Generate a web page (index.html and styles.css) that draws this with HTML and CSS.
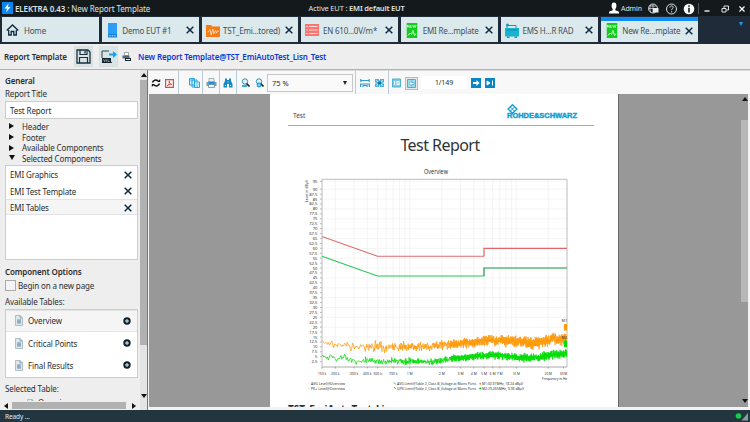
FILE: index.html
```html
<!DOCTYPE html>
<html lang="en">
<head>
<meta charset="utf-8">
<title>ELEKTRA 0.43 : New Report Template</title>
<link rel="stylesheet" href="styles.css">
</head>
<body>
<svg class="defs" width="0" height="0">
  <symbol id="x" viewBox="0 0 8 8"><path d="M.7.7l6.6 6.6M7.3.7L.7 7.3" stroke="#0b2c40" stroke-width="1.5"/></symbol>
  <symbol id="report" viewBox="0 0 11 15"><path d="M0 0h11v15H0z" fill="#12ce1c"/><path d="M1 2v2.500M1 2l1.700 2.500V2M4 2v2.500h1.200M4 3.200h1.200M6.300 2l.7 2.500.8-2 .8 2L9.500 2" stroke="#d8ffd8" stroke-width=".7" fill="none"/><path d="M1.500 12.500l2-2.500 1.500 1.500 1.500-4 1.500 5 1.500-2" stroke="#fff" stroke-width=".8" fill="none"/></symbol>
  <symbol id="doc" viewBox="0 0 8 11"><path d="M.5.5h4.700L7.500 3v7.500h-7z" fill="#dfe9ed" stroke="#9db4bf" stroke-width=".8"/><path d="M5 .5V3h2.500" fill="none" stroke="#7c9aa8" stroke-width=".8"/><path d="M2 4.500h4v4H2z" fill="#7293a3"/><path d="M2 5.800h4M2 7.200h4" stroke="#dfe9ed" stroke-width=".5"/></symbol>
  <symbol id="add" viewBox="0 0 8 8"><circle cx="4" cy="4" r="3.700" fill="#0b2230"/><path d="M4 2v4M2 4h4" stroke="#e8f2f4" stroke-width="1"/></symbol>
</svg>
<div class="app">
  <header class="titlebar">
    <svg class="logo" width="11" height="12"><path d="M0 0h11v12H0z" fill="#0a86ee"/><path d="M6.500 1.500L2.500 6.500h2.500L4 10.500l4.500-5.500H6z" fill="#fff"/></svg>
    <span class="app-name"><b>ELEKTRA 0.43 :</b> New Report Template</span>
    <span class="active-eut">Active EUT : <b>EMI default EUT</b></span>
    <svg class="user" width="12" height="12"><ellipse cx="6" cy="3.800" rx="2.400" ry="3.200" fill="#fff"/><path d="M4.700 6h2.600v2.300L11 9.800V11.500H1V9.800l3.700-1.500z" fill="#fff"/></svg>
    <span class="admin">Admin</span>
    <svg class="sys" width="104" height="14" fill="none" stroke="#dde2e4">
      <circle cx="7" cy="6.500" r="4.500" stroke-width=".9"/><path d="M2.500 6.500h9M7 2v9M3.500 4h7M5 2.500c-1.500 3-1.500 5 0 8" stroke-width=".7"/><path d="M7 6h5.500v4.500H7z" fill="#e8ebec" stroke="none"/>
      <circle cx="25.500" cy="7" r="5" stroke-width="1"/><path d="M23.900 5.500c0-2.200 3.300-2.100 3.300-.1 0 1.200-1.600 1.200-1.600 2.700M25.600 9.200v1.200" stroke-width="1"/>
      <circle cx="43" cy="7" r="5.300" fill="#fff" stroke="none"/><path d="M43 3.200v1.600M43 5.800v4.700" stroke="#14191c" stroke-width="1.600"/>
      <path d="M52.500 1v11" stroke="#4d565b"/><path d="M58.500 9h5" stroke-width="1.500"/>
      <path d="M76 6.500h4v3.500h-4zM78 6V4h4.500v4H80.500" stroke-width="1"/><path d="M93.500 4.500l5 5M98.500 4.500l-5 5" stroke="#fff" stroke-width="1.200"/>
    </svg>
  </header>
  <nav class="tabs">
    <div class="tab home"><svg width="13" height="12" fill="none" stroke="#0c2b3f"><path d="M.7 6.500L6.500 1l5.800 5.500" stroke-width="1.400"/><path d="M2.700 6v5h2.500V7.500h2.600V11h2.500V6" stroke-width="1.300"/></svg><span>Home</span></div>
    <div class="tab"><svg width="13" height="15"><path d="M2 0h9v11H2z" fill="#2b9df4"/><path d="M2 11h9v3.500H2z" fill="#1480d8"/><path d="M3.200 12.800h1.500M5.700 12.800h1.500M8.200 12.800h1.500" stroke="#cfe8fb"/></svg><span>Demo EUT #1</span><svg class="close" width="8" height="8"><use href="#x"/></svg></div>
    <div class="tab"><svg width="14" height="13"><path d="M0 1h5l1 1.500h8V13H0z" fill="#f77a12"/><path d="M1 8h1.500L4 5.500 5.200 11 6.800 5l1.200 5 1.500-3.500 1 2.500 1.200-2.500L13 8" fill="none" stroke="#ffe8d0" stroke-width=".8"/></svg><span>TST_Emi...tored)</span><svg class="close" width="8" height="8"><use href="#x"/></svg></div>
    <div class="tab"><svg width="14" height="12"><path d="M0 0h14v12H0z" fill="#fa7470"/><path d="M1.300 2.500h1.500M1.300 6h1.500M1.300 9.500h1.500M4 2.500h8.500M4 6h8.500M4 9.500h8.500" stroke="#ffe0de" stroke-width="1.100"/></svg><span>EN 610...0V/m*</span><svg class="close" width="8" height="8"><use href="#x"/></svg></div>
    <div class="tab"><svg width="14" height="15"><use href="#report" x="1.500" width="11" height="15"/></svg><span>EMI Re...mplate</span><svg class="close" width="8" height="8"><use href="#x"/></svg></div>
    <div class="tab"><svg width="14" height="15"><path d="M0 5h14v8.500H0z" fill="#18b2d2"/><path d="M2 5V2.500h9V5" fill="none" stroke="#1597b8"/><circle cx="2.500" cy="2" r="1.500" fill="#1597b8"/><path d="M1.500 7h11" stroke="#0e8dab"/><path d="M2 13.500h2.500V15H2zM9.500 13.500H12V15H9.500z" fill="#1597b8"/></svg><span>EMS H...R RAD</span><svg class="close" width="8" height="8"><use href="#x"/></svg></div>
    <div class="tab active"><svg width="14" height="15"><use href="#report" x="1.500" width="11" height="15"/></svg><span>New Re...mplate</span><svg class="close" width="8" height="8"><use href="#x"/></svg></div>
    <i class="more"></i>
  </nav>
  <section class="heading">
    <b class="heading-title">Report Template</b>
    <button class="tool"><svg width="15" height="15" fill="none" stroke="#16303d"><path d="M1 1h11l2 2v11H1z" stroke-width="1.300"/><path d="M4 1v4.500h7V1M3.500 14V8.500h8V14M9 2v2.500" stroke-width="1.200"/></svg></button>
    <button class="tool second"><svg width="16" height="15" fill="none"><path d="M8 2H1v7M1 13.500h10" stroke="#30454e"/><path d="M1 9h9v5H1z" fill="#13242c"/><path d="M2.500 10.500l1 2 1-2M5.500 12.500v-2M7 10.500v2h1.500" stroke="#dde" stroke-width=".6"/><path d="M8 4.500h4V2l4 3.500L12 9V6.500H8z" fill="#12a2f2"/></svg></button>
    <svg class="printer" width="10" height="10"><path d="M2.500.5h4v3h-4z" fill="#fff" stroke="#789" stroke-width=".7"/><path d="M.5 3.500h7v3h-7z" fill="#536872"/><path d="M3 6h6v3H3z" fill="#17242b"/><path d="M4 7h4v1H4z" fill="#e3f4fa"/></svg>
    <b class="template-link">New Report Template@TST_EmiAutoTest_Lisn_Test</b>
  </section>
  <main class="workspace">
    <aside class="side">
      <div class="options">
        <h2>General</h2>
        <label>Report Title</label>
        <div class="input">Test Report</div>
        <ul class="tree"><li><i class="tri"></i>Header</li><li><i class="tri"></i>Footer</li><li><i class="tri"></i>Available Components</li><li><i class="tri open"></i>Selected Components</li></ul>
        <ul class="components">
          <li>EMI Graphics<svg width="8" height="8"><use href="#x"/></svg></li>
          <li>EMI Test Template<svg width="8" height="8"><use href="#x"/></svg></li>
          <li class="selected">EMI Tables<svg width="8" height="8"><use href="#x"/></svg></li>
        </ul>
        <h2 class="component-title">Component Options</h2>
        <label class="check"><i></i>Begin on a new page</label>
        <label class="tables-label">Available Tables:</label>
        <ul class="tables">
          <li class="selected"><svg width="8" height="11"><use href="#doc"/></svg><span>Overview</span><svg width="8" height="8"><use href="#add"/></svg></li>
          <li><svg width="8" height="11"><use href="#doc"/></svg><span>Critical Points</span><svg width="8" height="8"><use href="#add"/></svg></li>
          <li><svg width="8" height="11"><use href="#doc"/></svg><span>Final Results</span><svg width="8" height="8"><use href="#add"/></svg></li>
        </ul>
        <label class="chosen-label">Selected Table:</label>
        <div class="chosen"><svg width="8" height="11"><use href="#doc"/></svg><span>Overview</span></div>
        <div class="hscroll"><i class="left"></i><b></b><i class="right"></i></div>
      </div>
      <div class="vscroll"><i class="up"></i><b></b><i class="down"></i></div>
    </aside>
    <section class="preview">
      <div class="toolbar">
        <div class="group g1"><svg width="10" height="10" fill="none" stroke="#111" stroke-width="1.500"><path d="M1.500 4.500C2.300 2 5 1.500 7 2.800M8.500 5.500C7.700 8 5 8.500 3 7.200"/><path d="M6 4h3.200V1zM4 6H.8v3z" fill="#111" stroke="none"/></svg>
          <svg width="9" height="9" fill="none" stroke="#df4b43"><path d="M.6.600h7.800v7.800H.6z" stroke-width="1.200"/><path d="M2 7c2-1 3-4 2.300-5.200C3.500 2.500 5 5.500 7 5.500 5 5 3 6 2 7" stroke-width=".9"/></svg></div>
        <div class="group g2"><svg width="11" height="10"><path d="M.5.500h5v6.500h-5zM3 2h5v7H3z" fill="#c9ecfb" stroke="#2aa6df"/><path d="M5.500 4h5v5.500h-5z" fill="#edf9fe" stroke="#2aa6df"/><path d="M1 2h5M6.500 6h3M6.500 8h3" stroke="#2aa6df" stroke-width=".8"/></svg></div>
        <div class="group g3"><svg width="11" height="10"><path d="M3 .5h5v4H3z" fill="#eaf2f6" stroke="#7d95a2" stroke-width=".7"/><path d="M.5 4h10v4H.5z" fill="#8499a5"/><path d="M2.500 3.500h6v2h-6z" fill="#1687d8"/><path d="M2.500 6.500h6v3h-6z" fill="#eaf5fb" stroke="#4b83a1" stroke-width=".7"/></svg></div>
        <div class="group g4"><svg width="10" height="10" fill="#1688c4"><path d="M2 .5h2v1.500h2V.5h2V3l1.500 3v3.500H6V6H4v3.500H.5V6L2 3z"/><path d="M2 7.500h1M7 7.500h1M4.500 4h1" stroke="#bde9fb"/></svg></div>
        <div class="group g5"><svg width="9" height="10" fill="none"><circle cx="4" cy="3.500" r="2.700" stroke="#3e8fac" fill="#d9f2fb"/><path d="M5.500 5.500l3 3" stroke="#222" stroke-width="1.700"/><path d="M1 8h5" stroke="#35abda" stroke-width="2"/></svg>
          <svg width="9" height="10" fill="none"><circle cx="4" cy="3.500" r="2.700" stroke="#3e8fac" fill="#d9f2fb"/><path d="M5.500 5.500l3 3" stroke="#222" stroke-width="1.700"/><circle cx="4" cy="7" r="2.400" fill="#159bd2"/><path d="M2.700 7h2.600M4 5.700v2.600" stroke="#fff" stroke-width=".6"/></svg></div>
        <div class="zoom-box">75 %<i class="caret"></i></div>
        <div class="group g6"><svg width="10" height="10" fill="none" stroke="#2d9ec9" stroke-width="1.200"><path d="M.8 1v3M9.200 1v3M1 2.500h8M.6 9V6h8.800v3M3 9V7.500h4V9"/></svg>
          <svg width="9" height="10"><path d="M0 1h9v8H0z" fill="#47b2dc"/><path d="M1.500 2.500l6 5M7.500 2.500l-6 5" stroke="#fff"/><path d="M3 3.500h3v3H3z" fill="#16779e"/><path d="M4.500 1v1.500M4.500 7.500V9M0 5h1.500M7.500 5H9" stroke="#fff"/></svg></div>
        <div class="group g7"><svg width="9" height="10"><path d="M.5 1h8v8h-8z" fill="#7dcbe6" stroke="#4fb0d3"/><path d="M2.500 3v4M7 3.500h-2v3h2z" fill="none" stroke="#effaff" stroke-width="1.100"/></svg>
          <span class="prev"><svg width="9" height="9"><path d="M.5.500h8v8h-8z" fill="#9cdcef" stroke="#4bb0d0"/><path d="M4.700 2L2 4.500 4.700 7V5.500H7v-2H4.700z" fill="#fff" stroke="#2795ba" stroke-width=".6"/></svg></span></div>
        <div class="page-number">1/149</div>
        <div class="group g8"><svg width="10" height="10"><path d="M0 0h10v10H0z" fill="#0a86c8"/><path d="M5.500 2L8.500 5l-3 3V6H2V4h3.500z" fill="#fff"/></svg>
          <svg width="10" height="10"><path d="M0 0h10v10H0z" fill="#0a86c8"/><path d="M2 3v4l3-2zM7.500 2.500v5" fill="#fff" stroke="#fff"/></svg></div>
      </div>
      <div class="viewer">
        <article class="page">
          <div class="page-head"><span>Test</span>
            <svg width="71" height="15"><g fill="none" stroke="#0b9ed3"><path d="M5.500 .7L10 5 5.500 9.300 1 5z" stroke-width="1.300"/><path d="M3.200 2.900l4.500 4.300M7.700 2.900L3.200 7.200" stroke-width="1"/></g><text x="0" y="14.200" textLength="70" lengthAdjust="spacingAndGlyphs" class="brand">ROHDE&amp;SCHWARZ</text></svg></div>
          <h1>Test Report</h1>
          <svg class="chart" viewBox="270 165 348 234" width="348" height="234" id="chart"></svg>
          <h3>TST_EmiAutoTest_Lisn</h3>
        </article>
        <div class="vscroll viewer-scroll"><i class="up"></i><b></b><i class="down"></i></div>
      </div>
    </section>
  </main>
  <footer class="status"><span>Ready ...</span><svg width="14" height="10"><circle cx="3.500" cy="5" r="2.800" fill="#18cb4a"/><path d="M13 2v7.500H6.500z" fill="#8b9ba3"/></svg></footer>
</div>
<script src="chart.js"></script>
</body>
</html>
```
FILE: styles.css
```css
* { box-sizing: border-box; }
body { margin: 0; font-family: "Noto Sans", "Open Sans", sans-serif; font-size: 8px; line-height: 11px; letter-spacing: -.13px; color: #2b2e30; }
ul, h1, h2, h3 { margin: 0; padding: 0; list-style: none; }
svg { display: block; flex: none; }
.defs { position: absolute; }
b { font-weight: 600; }
.app { width: 750px; height: 422px; display: flex; flex-direction: column; overflow: hidden; background: #eeeeee; white-space: nowrap; }

.titlebar { height: 16px; background: #14191c; color: #dfe3e5; display: flex; align-items: center; padding-left: 2px; flex: none; }
.logo { margin-right: 2px; }
.app-name { width: 294px; font-size: 8px; letter-spacing: -.11px; }
.active-eut { width: 300px; font-size: 7.5px; letter-spacing: -.17px; }
.user { margin: 0; }
.admin { font-size: 7px; margin-left: 1px; width: 25px; letter-spacing: -.1px; }
.sys { margin-top: 1px; }

.tabs { height: 28px; background: #1f2b39; display: flex; gap: 3px; padding: 1px 0 2px 2px; flex: none; }
.tab { width: 96.8px; background: #dce9ec; display: flex; align-items: center; padding: 1px 5px 0 4px; gap: 3.500px; font-size: 8px; color: #405058; letter-spacing: -.2px; }
.tab span { flex: 1; width: 0; }
.tab.home { gap: 5px; }
.tab.active { border-top: 4px solid #108bf2; padding-top: 0; padding-bottom: 2px; }
.more { width: 0; height: 0; border: 2.500px solid transparent; border-top: 4px solid #1c9be8; border-bottom: 0; margin: 5px 0 0 38px; }

.heading { height: 26px; border-bottom: 1px solid #a4b4c2; display: flex; align-items: center; padding-left: 4px; flex: none; background: #eee; }
.heading-title { width: 69px; font-size: 8px; }
.tool { width: 19px; height: 21px; border: 1px solid #dadedf; background: #d9e4e7; padding: 0; display: flex; align-items: center; justify-content: center; margin-left: 1px; }
.tool.second { margin-left: 6px; }
.printer { margin: 0 6px 0 4px; }
.template-link { color: #0b37d8; font-size: 8px; letter-spacing: -.17px; }

.workspace { height: 340px; display: flex; flex: none; }
.side { width: 148px; display: flex; border-right: 1px solid #777; background: #eee; }
.options { width: 140px; padding: 4px 2px 0 5px; display: flex; flex-direction: column; }
h2 { font-size: 8px; font-weight: 600; line-height: 13px; }
.options > label { display: block; line-height: 13px; }
.input { height: 18px; margin-top: 1px; background: #fff; border: 1px solid #ccc; padding-left: 4px; line-height: 17px; flex: none; }
.tree { padding: 2px 0 0 4px; }
.tree li { display: flex; align-items: center; height: 10.700px; }
.tri { width: 13px; height: 6px; }
.tri::before { content: ""; display: block; width: 0; height: 0; border: 3px solid transparent; border-left: 5px solid #101314; border-right: 0; }
.tri.open::before { border: 3px solid transparent; border-top: 5px solid #101314; border-bottom: 0; }
.components { height: 95px; margin-top: 1px; background: #fff; border: 1px solid #ccc; flex: none; }
.components li { height: 16.500px; display: flex; align-items: center; justify-content: space-between; padding: 1px 5px 0 4px; }
.selected { background: #f5f5f5; border-top: 1px solid #e3e3e3; border-bottom: 1px solid #e3e3e3; }
.component-title { margin-top: 5px; }
.options > .check { display: flex; align-items: center; height: 15px; }
.check i { width: 11px; height: 11px; border: 1px solid #aaa; background: #f4f4f4; margin-right: 2px; }
.options > .tables-label { margin-top: 2px; line-height: 13px; }
.tables { background: #fff; border: 1px solid #ccc; height: 69px; margin-top: 1px; flex: none; }
.tables li { height: 22.300px; display: flex; align-items: center; padding: 0 6px 0 9px; }
.tables span { flex: 1; margin-left: 5px; }
.options > .chosen-label { margin-top: 4px; }
.chosen { height: 6px; overflow: hidden; display: flex; padding: 4px 0 0 22px; gap: 3px; flex: none; }
.chosen span { line-height: 8px; }
.hscroll { display: flex; align-items: center; height: 8px; margin: 1px 0 0 -5px; flex: none; }
.hscroll b { height: 7px; width: 115px; background: #b1b1b1; }
.left, .right { width: 12px; height: 6px; }
.left::before, .right::before { content: ""; display: block; width: 0; height: 0; border: 3px solid transparent; margin-left: 4px; }
.left::before { border-right: 4px solid #111; border-left: 0; }
.right::before { border-left: 4px solid #111; border-right: 0; margin-left: 6px; }
.vscroll { width: 7px; display: flex; flex-direction: column; align-items: center; background: #e4e4e4; }
.vscroll b { width: 7px; height: 265px; background: #b1b1b1; }
.up, .down { height: 10px; width: 0; }
.up::before, .down::before { content: ""; display: block; width: 0; margin-left: -3px; border: 3px solid transparent; }
.up::before { border-bottom: 4px solid #111; border-top: 0; margin-top: 3px; }
.down::before { border-top: 4px solid #111; border-bottom: 0; margin-top: 49px; }

.preview { flex: 1; display: flex; flex-direction: column; padding-left: 1px; background: #f3f3f3; }
.toolbar { height: 24px; background: #f8f8f8; border-top: 1px solid #dadada; display: flex; align-items: stretch; flex: none; }
.group { display: flex; align-items: center; border-right: 1px solid #b8cbd6; padding-top: 1px; }
.g1 { width: 30px; padding-left: 2px; gap: 4px; }
.g2 { width: 24px; padding-left: 10px; }
.g3 { width: 17px; padding-left: 3px; }
.g4 { width: 17px; padding-left: 3px; }
.g5 { width: 30px; padding-left: 4px; gap: 5px; border: 0; }
.zoom-box { width: 86px; border: 1px solid #c4c8ca; margin: 3px 0 2px; display: flex; align-items: center; justify-content: space-between; padding: 0 5px 0 4px; background: #fafafa; font-size: 7.5px; letter-spacing: 0; }
.caret { width: 0; height: 0; border: 2.500px solid transparent; border-top: 4px solid #222; border-bottom: 0; }
.g6 { width: 34px; border-left: 1px solid #b8cbd6; padding-left: 4px; gap: 5px; margin-left: 2px; }
.g7 { border: 0; width: 33px; padding-left: 3px; gap: 4px; }
.prev { background: #e8e8e8; border: 1px solid #bbb; padding: 1px; }
.page-number { width: 46px; background: #fff; margin: 5px 4px 5px -1px; text-align: center; font-size: 7px; line-height: 14px; letter-spacing: -.1px; }
.g8 { border: 0; gap: 4px; }
.viewer { height: 313px; background: #989898; display: flex; margin-right: 2px; overflow: hidden; }
.page { margin-left: 121px; width: 349px; background: #fff; border-right: 1px solid #686868; overflow: hidden; height: 313px; }
.page-head { display: flex; justify-content: space-between; height: 32px; border-bottom: 1px solid #aaa; margin: 0 24px 0 18px; padding: 10px 16px 0 5px; }
.page-head span { font-size: 6.5px; margin-top: 6px; color: #444; letter-spacing: 0; }
.brand { font: 700 7px "Liberation Sans", sans-serif; fill: #0b9ed3; stroke: #0b9ed3; stroke-width: .4px; letter-spacing: 0; }
h1 { font-weight: 400; font-size: 16px; line-height: 22px; text-align: center; height: 39px; padding: 8px 8px 0 0; letter-spacing: -.55px; color: #303437; }
h3 { margin: 4px 0 0 18px; font-size: 10px; line-height: 13px; font-weight: 700; letter-spacing: 0; }
.chart { font-family: "Open Sans", sans-serif; letter-spacing: 0; }
.viewer-scroll { margin-left: auto; padding-top: 0; background: #989898; }
.viewer-scroll b { height: 182px; margin-top: 16px; background: #b7b7b7; }
.viewer-scroll .down::before { margin-top: 97px; }

.status { height: 12px; margin-top: auto; background: #233640; color: #e2e8ea; display: flex; align-items: center; justify-content: space-between; padding: 0 1px 0 5px; font-size: 6.5px; letter-spacing: -.1px; flex: none; }
```
FILE: chart.js
```js
const parts = [];
const yOf = db => 366.6 - 1.971 * db;
const xOf = mhz => 322 + 106.5 * Math.log10(mhz / 0.15);
const line = (x1, y1, x2, y2, color) =>
  parts.push(`<path d="M${x1} ${y1}L${x2} ${y2}" stroke="${color}" stroke-width=".7" fill="none"/>`);
const text = (x, y, value, size, anchor, width, extra = '') =>
  parts.push(`<text x="${x}" y="${y}" font-size="${size}" text-anchor="${anchor}" fill="#222" ${width ? `textLength="${width}" lengthAdjust="spacingAndGlyphs"` : ''} ${extra}>${value}</text>`);

text(436, 173.500, 'Overview', 6.2, 'middle', 24);
for (let db = 2.5; db <= 95; db += 2.5) {
  if (db === 92.5) continue;
  const y = yOf(db) + (db === 95 ? 2 : 0);
  if (db % 5 === 0) line(322, y, 567, y, '#f0f0f0');
  line(320, y, 322, y, '#999');
  text(317.5, y + 1.5, db, 4.2, 'end');
}
for (const f of [.2, .3, .4, .5, .6, .7, .8, .9, 1, 2, 3, 4, 5, 6, 7, 8, 9, 10, 20])
  line(xOf(f), 179, xOf(f), 367, '#efefef');
parts.push('<path d="M322 367V179.300H567V367" fill="none" stroke="#bcbcbc"/>');
line(322, 367, 567, 367, '#888');
text(307.5, 202, 'Level in dBµV', 4, 'start', 22, 'transform="rotate(-90 307.5 202)"');

const ticks = [[.15, '150 k'], [.2, '200 k'], [.3, '300 k'], [.4, '400 k'], [.5, '500 k'], [.7, '700 k'], [1, '1 M'], [2, '2 M'], [3, '3 M'], [4, '4 M'], [5, '5 M'], [6, '6 M'], [7, '7 M'], [10, '10 M'], [20, '20 M'], [27.800, '30 M']];
for (const [f, label] of ticks) {
  line(xOf(f), 367, xOf(f), 368.5, '#888');
  text(xOf(f), 375, label, 4, 'middle', label.length > 4 ? 8.5 : label.length > 3 ? 7.5 : 6);
}
text(567, 380, 'Frequency in Hz', 3.8, 'end', 25);

const limit = (a, b, c, first, last) => parts.push(
  `<path d="M322 ${a}L377.500 ${b}H484" stroke="${first}" fill="none" stroke-width="1.100"/><path d="M484 ${b}V${c}H567" stroke="${last}" fill="none" stroke-width="1.200"/>`);
limit(236.5, 256.2, 248.4, '#df6b6d', '#e46568');
limit(256.2, 276, 268, '#27c850', '#159846');

let seed = 7;
const random = () => (seed = (seed * 16807) % 2147483647) / 2147483647;
function at(points, x) {
  let i = 1;
  while (i < points.length - 1 && points[i][0] < x) i++;
  const [a, b] = [points[i - 1], points[i]];
  return a[1] + (b[1] - a[1]) * (x - a[0]) / (b[0] - a[0]);
}
function trace(center, spread, color) {
  let d = '';
  for (let x = 322; x <= 566.5; x += x < 365 ? .9 : x < 400 ? .45 : x < 450 ? .25 : .1) {
    const noise = (random() + random() + random() - 1.5) / 1.5;
    d += `${d ? 'L' : 'M'}${x.toFixed(2)} ${(at(center, x) + noise * at(spread, x)).toFixed(2)}`;
  }
  parts.push(`<path d="${d}" fill="none" stroke="${color}" stroke-width=".75" stroke-linejoin="round"/>`);
}
trace([[322, 341], [326, 343], [331, 342], [334, 346], [344, 344], [353, 347.500], [366, 346], [376, 347], [430, 346.5], [450, 344.500], [470, 342.500], [488, 340], [505, 340.500], [530, 343], [545, 341.500], [552, 339], [567, 338.500]],
  [[322, 4], [360, 6], [375, 7.5], [430, 6], [470, 6.5], [567, 9]], '#ff9b0c');
trace([[322, 355], [326, 358], [331, 356], [336, 360], [342, 358], [344, 353], [348, 360], [358, 362], [366, 360], [376, 361.500], [430, 361.500], [450, 359], [470, 357], [485, 355.500], [500, 355.500], [520, 357.500], [538, 358], [550, 355], [567, 353]],
  [[322, 3], [360, 5], [430, 4.500], [470, 5], [567, 6.500]], '#06dc0a');

parts.push('<path d="M564 324h3v6.500h-3z" fill="#ff9b0c"/><path d="M564 340.500h3v6.500h-3z" fill="#06dc0a"/>');
text(567, 322, 'M1', 3.6, 'end');
text(567, 338.500, 'M2', 3.6, 'end');
text(311, 385.3, 'AVG Level@Overview', 3.8, 'start', 34);
text(311, 389.9, 'PK+ Level@Overview', 3.8, 'start', 34);
text(397, 385.3, 'AVG Limit@Table 2_Class B_Voltage at Mains Ports', 3.8, 'start', 79);
text(397, 389.9, 'QPK Limit@Table 2_Class B_Voltage at Mains Ports', 3.8, 'start', 79);
text(482, 385.3, 'M1:30.91MHz, 18.24 dBµV', 3.8, 'start', 41);
text(482, 389.9, 'M2:29.265MHz, 9.93 dBµV', 3.8, 'start', 42);
parts.push('<path d="M308.500 382.500l1.500 2" stroke="#f6d79c" stroke-width=".7"/><path d="M308.500 387l1.500 2" stroke="#b6eeb6" stroke-width=".7"/><path d="M394 382.500l1.800 2" stroke="#19b848"/><path d="M394 387l1.800 2" stroke="#e05a6a"/><circle cx="480.300" cy="383.800" r="1" fill="#f59b12"/><circle cx="480.300" cy="388.500" r="1.100" fill="#08ba18"/>');
document.getElementById('chart').innerHTML = parts.join('');
```
